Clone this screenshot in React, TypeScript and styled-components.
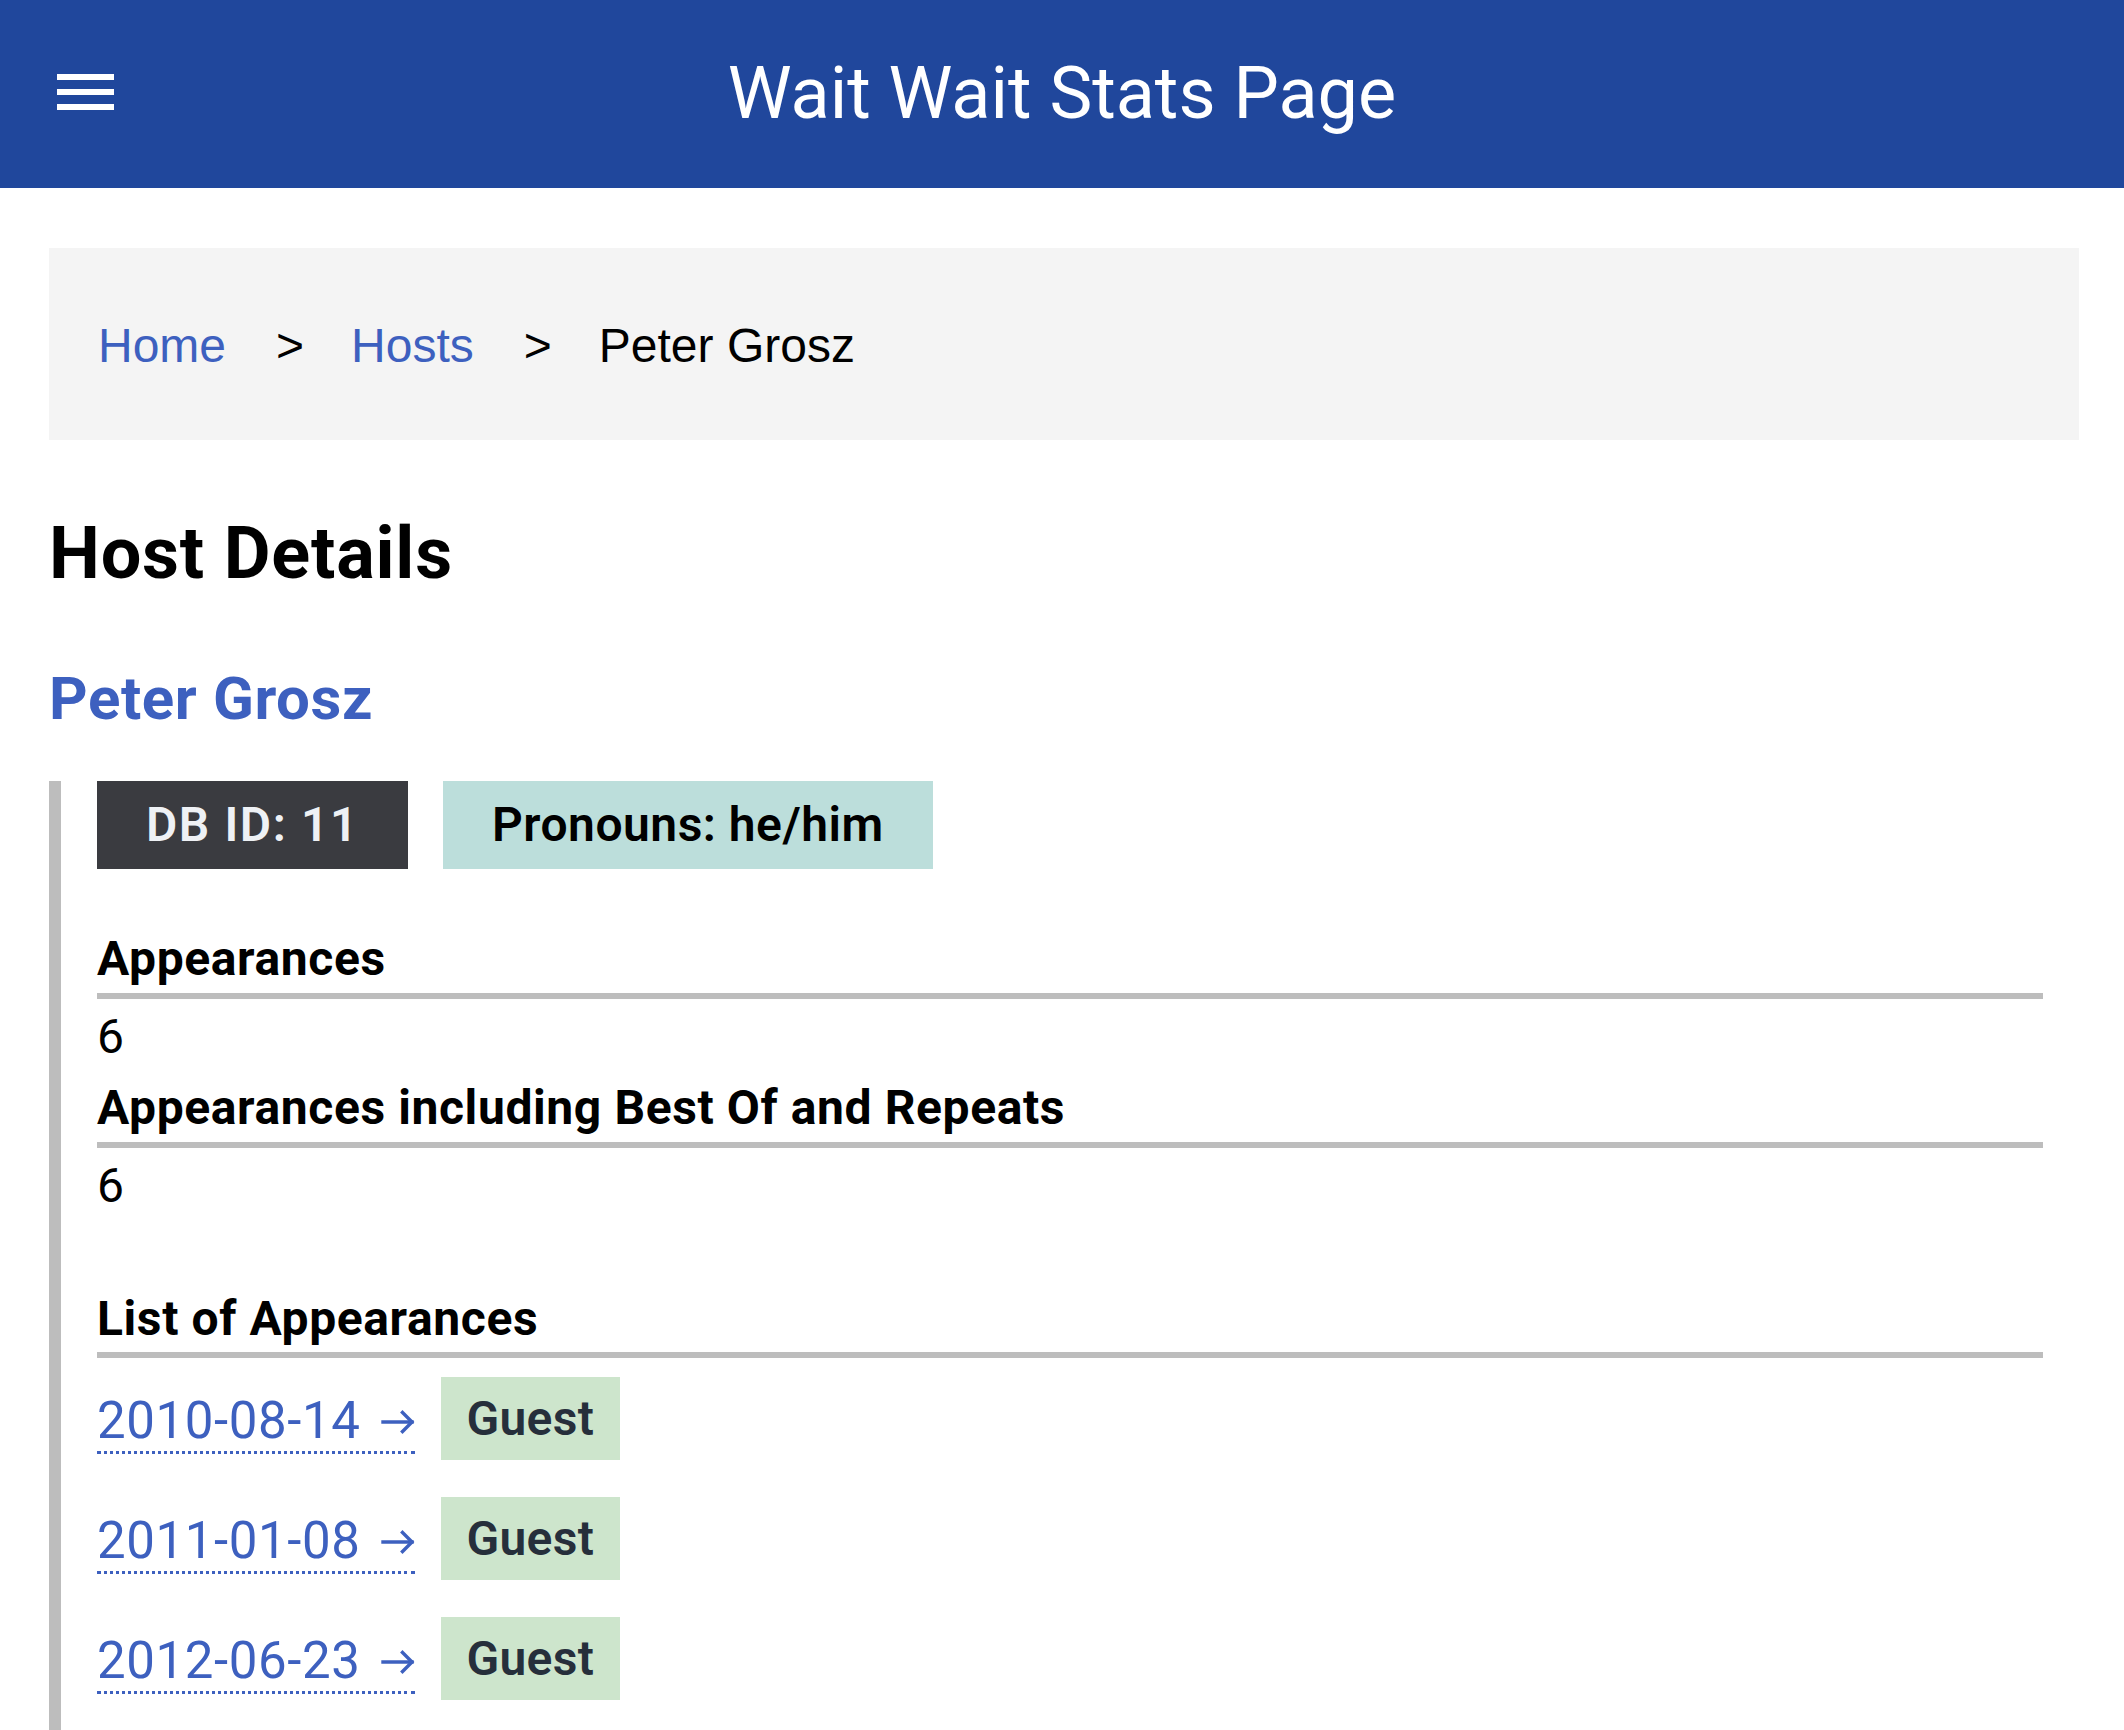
import React from 'react'
import styled, { createGlobalStyle } from 'styled-components'

type BadgeKind = 'id' | 'pronouns' | 'guest'

type Appearance = {
    date: string;
    role: string;
}

const appearances: Appearance[] = [
    { date: '2010-08-14', role: 'Guest' },
    { date: '2011-01-08', role: 'Guest' },
    { date: '2012-06-23', role: 'Guest' },
]

const badgeStyles: Record<BadgeKind, { bg: string; fg: string; spacing: number }> = {
    id: { bg: '#3a3b40', fg: '#eef1f5', spacing: 1.6 },
    pronouns: { bg: '#bcdedb', fg: '#000', spacing: 0.5 },
    guest: { bg: '#cde5cc', fg: '#262f3b', spacing: 0.3 },
}

const MenuIcon = () => (
    <svg width="57" height="36" viewBox="0 0 57 36" fill="#fff">
        <rect x="0" y="0" width="57" height="6" />
        <rect x="0" y="15" width="57" height="6" />
        <rect x="0" y="30" width="57" height="6" />
    </svg>
)

const ArrowIcon = () => (
    <svg width="34" height="24" viewBox="0 0 34 24" fill="none" stroke="currentColor" strokeWidth="3.4" strokeLinecap="square">
        <path d="M2 12 H31" />
        <path d="M21.5 2.5 L31 12 L21.5 21.5" />
    </svg>
)

const App = () => {
    return (
        <>
            <GlobalStyle />
            <Header>
                <MenuButton aria-label="Menu">
                    <MenuIcon />
                </MenuButton>
                <SiteTitle>Wait Wait Stats Page</SiteTitle>
                <span />
            </Header>
            <Main>
                <Crumbs>
                    <Crumb><CrumbLink href="#">Home</CrumbLink></Crumb>
                    <Separator>&gt;</Separator>
                    <Crumb><CrumbLink href="#">Hosts</CrumbLink></Crumb>
                    <Separator>&gt;</Separator>
                    <Crumb>Peter Grosz</Crumb>
                </Crumbs>

                <PageTitle>Host Details</PageTitle>
                <HostName>Peter Grosz</HostName>

                <Details>
                    <BadgeRow>
                        <Badge kind="id">DB ID: 11</Badge>
                        <Badge kind="pronouns">Pronouns: he/him</Badge>
                    </BadgeRow>

                    <StatList>
                        <StatLabel>Appearances</StatLabel>
                        <StatValue>6</StatValue>
                        <StatLabel>Appearances including Best Of and Repeats</StatLabel>
                        <StatValue>6</StatValue>
                    </StatList>

                    <ListHeading>List of Appearances</ListHeading>
                    <AppearanceList>
                        {appearances.map(a => (
                            <AppearanceRow key={a.date}>
                                <DateLink href="#">
                                    <span>{a.date}</span>
                                    <ArrowIcon />
                                </DateLink>
                                <Badge kind="guest">{a.role}</Badge>
                            </AppearanceRow>
                        ))}
                    </AppearanceList>
                </Details>
            </Main>
        </>
    )
}

export default App;

const GlobalStyle = createGlobalStyle`
    * {
        box-sizing: border-box;
    }
    html, body {
        margin: 0;
        padding: 0;
        background: #fff;
    }
    body {
        font-family: Roboto, "Noto Sans", sans-serif;
        color: #000;
    }
`

const Header = styled.header`
    display: grid;
    grid-template-columns: 1fr auto 1fr;
    align-items: center;
    height: 188px;
    padding: 0 57px;
    background-color: #20479c;
    color: #fff;
`
const MenuButton = styled.div`
    align-self: start;
    margin-top: 74px;
    width: 57px;
    height: 36px;
    cursor: pointer;

    & svg {
        display: block;
    }
`
const SiteTitle = styled.div`
    font-size: 72px;
    font-weight: 400;
    line-height: 1;
    white-space: nowrap;
`
const Main = styled.main`
    padding: 60px 45px 0 49px;
`
const Crumbs = styled.ol`
    display: flex;
    align-items: center;
    margin: 0;
    padding: 70px 49px 66px;
    list-style: none;
    background-color: #f4f4f4;
    font-family: "Liberation Sans", Arial, sans-serif;
    font-size: 48px;
    line-height: 56px;
`
const Crumb = styled.li`
    color: #000;
`
const CrumbLink = styled.a`
    color: #3d60bf;
    text-decoration: none;
`
const Separator = styled.li`
    margin: 0 47px 0 50px;
    color: #000;
`
const PageTitle = styled.h1`
    margin: 71px 0 0;
    font-size: 72px;
    font-weight: 700;
    line-height: 86px;
    letter-spacing: 0.8px;
`
const HostName = styled.h2`
    margin: 66px 0 0;
    font-size: 60px;
    font-weight: 700;
    line-height: 72px;
    letter-spacing: 0.6px;
    color: #3d60bf;
`
const Details = styled.section`
    margin-top: 54px;
    padding: 0 36px 60px;
    border-left: 12px solid #bdbdbd;
`
const BadgeRow = styled.div`
    display: flex;
    gap: 35px;
    margin-top: -8px;
`
const Badge = styled.span<{ kind: BadgeKind }>`
    display: inline-block;
    height: ${p => p.kind === 'guest' ? 83 : 88}px;
    line-height: ${p => p.kind === 'guest' ? 83 : 88}px;
    padding: 0 ${p => p.kind === 'guest' ? 26 : 49}px;
    background-color: ${p => badgeStyles[p.kind].bg};
    color: ${p => badgeStyles[p.kind].fg};
    letter-spacing: ${p => badgeStyles[p.kind].spacing}px;
    font-size: 48px;
    font-weight: 600;
    white-space: nowrap;
`
const StatList = styled.dl`
    margin: 56px 0 0;
`
const StatLabel = styled.dt`
    font-size: 48px;
    font-weight: 700;
    line-height: 68px;
    letter-spacing: 0.6px;
    border-bottom: 6px solid #bdbdbd;
`
const StatValue = styled.dd`
    margin: 0;
    font-size: 48px;
    line-height: 75px;
`
const ListHeading = styled.h3`
    margin: 62px 0 0;
    font-size: 48px;
    font-weight: 700;
    line-height: 67px;
    letter-spacing: 0.6px;
    border-bottom: 6px solid #bdbdbd;
`
const AppearanceList = styled.div`
    display: flex;
    flex-direction: column;
    gap: 37px;
    margin-top: 19px;
`
const AppearanceRow = styled.div`
    display: flex;
    align-items: flex-start;
    gap: 26px;
`
const DateLink = styled.a`
    display: inline-flex;
    align-items: center;
    gap: 20px;
    margin-top: 14px;
    height: 63px;
    line-height: 60px;
    font-size: 51px;
    letter-spacing: 0.6px;
    color: #3d60bf;
    text-decoration: none;
    border-bottom: 3px dotted #3d60bf;

    & svg {
        display: block;
        margin-top: 2px;
    }
`
